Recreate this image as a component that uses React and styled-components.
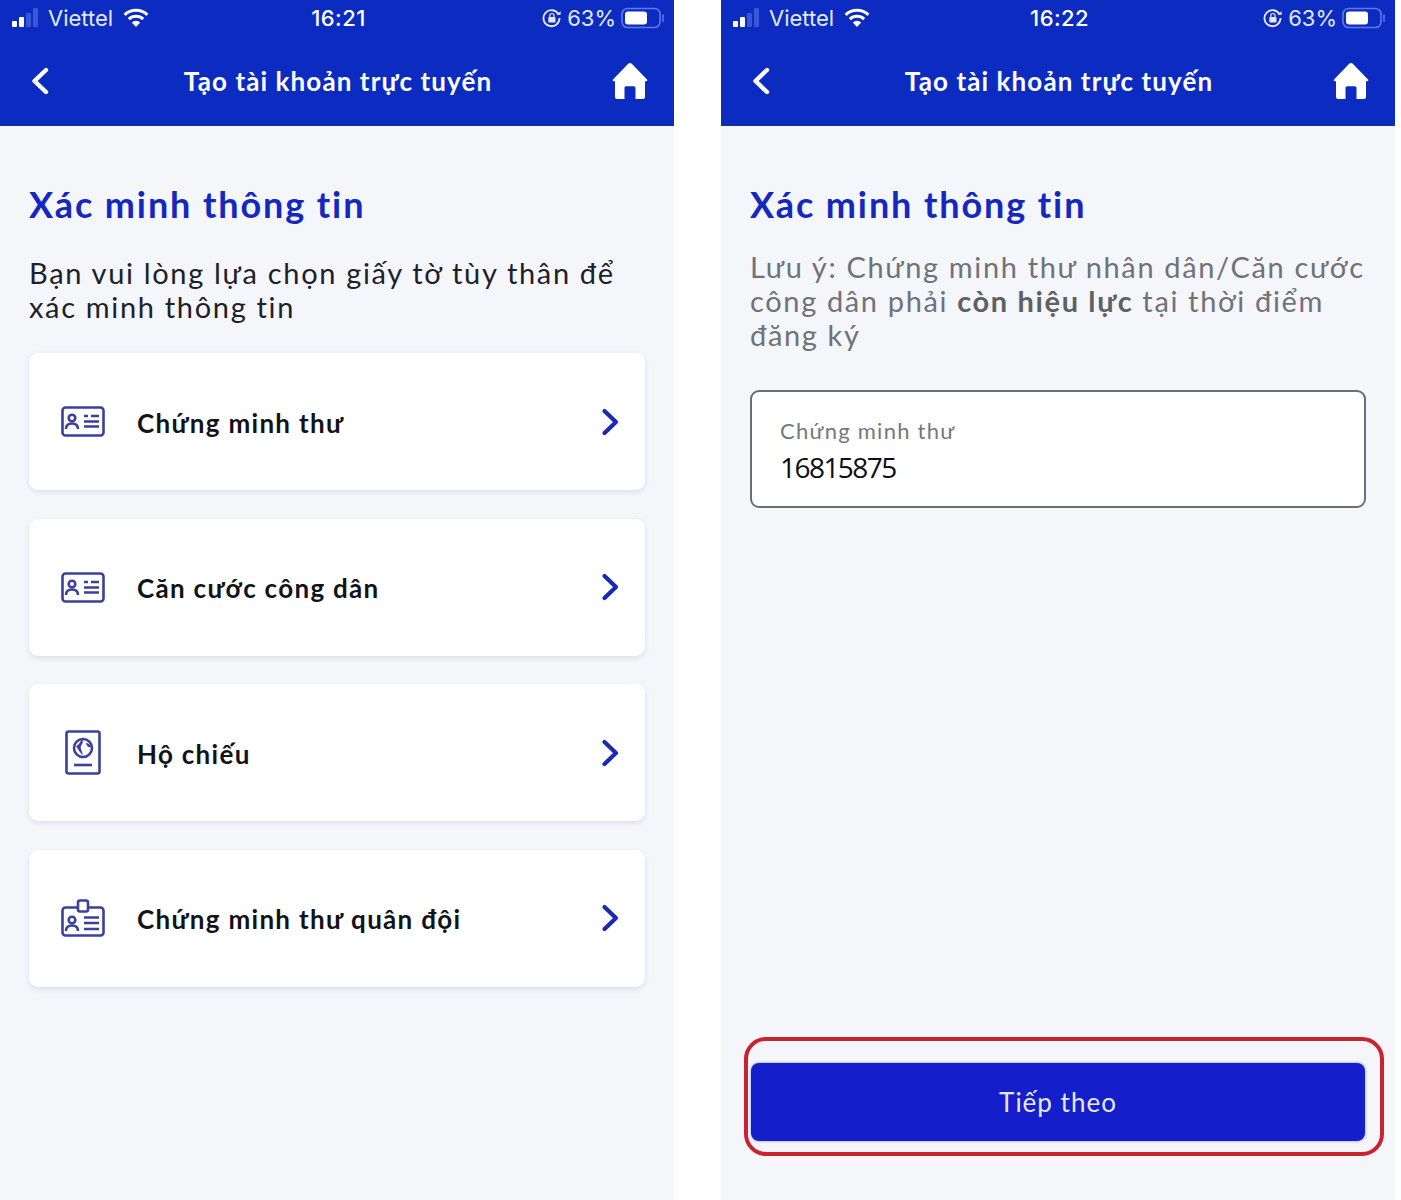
import React from "react";
import styled, { createGlobalStyle } from "styled-components";

const Global = createGlobalStyle`
  html, body { margin: 0; padding: 0; background: #fff; }
  body { font-family: "Lato", "Noto Sans", sans-serif; }
  * { box-sizing: border-box; }
`;
const Page = styled.div`
  width: 1401px; height: 1200px; display: flex; gap: 47px; overflow: hidden; background: #fff;
`;
const Phone = styled.div`
  width: 674px; height: 1200px; flex: none; display: flex; flex-direction: column; background: #f4f6fa; position: relative;
`;
const Header = styled.header`
  height: 126px; flex: none; background: #0b2bc1; color: #fff; display: flex; flex-direction: column;
  border-bottom: 1px solid #1c2f8e;
`;
const StatusBar = styled.div`
  height: 37px; flex: none; display: grid; grid-template-columns: 1fr auto 1fr; align-items: center; padding: 0 9px 2px 12px;
  font-size: 22px; color: #e3e8fb; font-family: "Inter", sans-serif;
`;
const StatusLeft = styled.div`display: flex; align-items: center; gap: 6px;`;
const StatusRight = styled.div`display: flex; align-items: center; justify-content: flex-end; gap: 5px;`;
const Clock = styled.div`font-weight: 500; font-size: 22px; letter-spacing: .4px; color: #fff;`;
const NavBar = styled.div`
  flex: 1; display: grid; grid-template-columns: 1fr auto 1fr; align-items: center; padding: 0 26px 0 30px;
`;
const NavTitle = styled.h1`
  margin: 0 2px 0 0; font-size: 26px; font-weight: 700; letter-spacing: 1.1px; color: #fff;
`;
const NavEnd = styled.div`display: flex; justify-content: flex-end;`;
const NavStart = styled.div`display: flex;`;
const Content = styled.main`
  flex: 1; display: flex; flex-direction: column; padding: 55px 29px 0;
`;
const Title = styled.h2`
  margin: 0; font-size: 36px; line-height: 46px; font-weight: 700; letter-spacing: 1.9px; color: #1427c0;
`;
const Intro = styled.p`
  margin: 29px 0 29px; font-size: 29px; line-height: 34px; letter-spacing: 1.67px; color: #1d1f2a;
`;
const Note = styled.p`
  margin: 23px 0 38px; font-size: 29px; line-height: 34px; letter-spacing: 1.64px; color: #6f7278;
  b { font-weight: 700; color: #5d6065; }
`;
const Cards = styled.div`display: flex; flex-direction: column; gap: 28.6px;`;
const Card = styled.div`
  height: 137px; background: #fff; border-radius: 9px; box-shadow: 0 2px 5px rgba(120,140,190,.22);
  display: flex; align-items: center; padding: 0 26px 0 32px;
`;
const CardIcon = styled.div`width: 44px; display: flex; justify-content: center; flex: none;`;
const CardLabel = styled.span`
  flex: 1; margin: 2px 0 0 32px; font-size: 26px; font-weight: 700; letter-spacing: 1.3px; color: #111318;
`;
const Chevron = styled.svg`display: block;`;
const Field = styled.div`
  height: 118px; background: #fff; border: 2px solid #6d6e72; border-radius: 9px; padding: 25px 28px 0;
`;
const FieldLabel = styled.div`font-size: 22px; line-height: 27px; letter-spacing: 1.25px; color: #75777c;`;
const FieldValue = styled.div`
  margin-top: 6px; font-size: 28px; line-height: 34px; color: #0d0e12; letter-spacing: -1.55px;
  font-family: "Open Sans", sans-serif;
`;
const Button = styled.button`
  margin: auto 1px 59px; height: 78px; border: none; border-radius: 8px; background: #141fcb;
  box-shadow: 0 0 3px rgba(90,120,240,.8); color: #e6e9fb; font: 400 26px "Lato", sans-serif; letter-spacing: 1px;
`;
const Highlight = styled.div`
  position: absolute; left: 23px; top: 1037px; width: 640px; height: 119px; border: 4px solid #c9232f; border-radius: 22px; pointer-events: none;
`;

const Signal = () => (
  <svg width="30" height="20" viewBox="0 0 30 20">
    <rect x="0" y="13" width="5" height="6" rx="1" fill="#fff" />
    <rect x="7" y="9" width="5" height="10" rx="1" fill="#fff" />
    <rect x="14" y="5" width="5" height="14" rx="1" fill="#3a57d6" />
    <rect x="21" y="0" width="5" height="19" rx="1" fill="#3a57d6" />
  </svg>
);
const Wifi = () => (
  <svg width="28" height="20" viewBox="0 0 28 20" style={{ marginLeft: 3 }}>
    <path d="M14 19l-4.2-4.6a6 6 0 0 1 8.400 0z" fill="#fff" />
    <path d="M6.800 11.200a10.500 10.500 0 0 1 14.400 0" stroke="#fff" strokeWidth="3" fill="none" />
    <path d="M2.600 6.800a16.600 16.600 0 0 1 22.800 0" stroke="#fff" strokeWidth="3" fill="none" />
  </svg>
);
const Lock = () => (
  <svg width="20" height="20" viewBox="0 0 20 20" fill="none">
    <path d="M16.600 6.500A8 8 0 1 0 17.500 10" stroke="#e3e8fb" strokeWidth="1.800" />
    <path d="M14.500 6.500l4 .5.2-3.800z" fill="#e3e8fb" />
    <rect x="6.300" y="9" width="7.200" height="5.500" rx="1" fill="#e3e8fb" />
    <path d="M7.800 9V7.600a2.100 2.100 0 0 1 4.200 0V9" stroke="#e3e8fb" strokeWidth="1.200" />
  </svg>
);
const Battery = () => (
  <svg width="44" height="22" viewBox="0 0 44 22" fill="none">
    <rect x="1" y="1.500" width="38" height="19" rx="5.500" stroke="#6079ea" strokeWidth="1.600" />
    <rect x="4" y="4.500" width="22" height="13" rx="3" fill="#fff" />
    <path d="M42 8v6" stroke="#6079ea" strokeWidth="1.600" strokeLinecap="round" />
  </svg>
);
const Back = () => (
  <svg width="20" height="28" viewBox="0 0 20 28" fill="none">
    <path d="M16 3L4.500 14 16 25" stroke="#fff" strokeWidth="4.400" strokeLinecap="round" strokeLinejoin="round" />
  </svg>
);
const Home = () => (
  <svg width="36" height="38" viewBox="0 0 36 38">
    <path fillRule="evenodd" d="M18 1c.7 0 1.300.3 1.800.8L35 17.500c.6.7.2 1.800-.8 1.800H33V35a2 2 0 0 1-2 2h-7.500V26c0-1-.7-1.700-1.700-1.700h-7.600c-1 0-1.700.7-1.700 1.700v11H5a2 2 0 0 1-2-2V19.300H1.800c-1 0-1.400-1.100-.8-1.800L16.200 1.800c.5-.5 1.100-.8 1.800-.8z" fill="#fff" />
  </svg>
);
const Arrow = () => (
  <Chevron width="18" height="28" viewBox="0 0 18 28" fill="none">
    <path d="M3.500 3L15 14 3.500 25" stroke="#1b2ab2" strokeWidth="4.200" strokeLinecap="round" strokeLinejoin="round" />
  </Chevron>
);
const stroke = "#3b3f9e";
const IdCard = () => (
  <svg width="44" height="31" viewBox="0 0 44 31" fill="none" stroke={stroke} strokeWidth="2.600">
    <rect x="1.500" y="1.500" width="41" height="28" rx="3" />
    <circle cx="11" cy="12" r="3.300" />
    <path d="M5 23c0-4 2.500-5.500 6-5.500s6 1.500 6 5.500" />
    <path d="M23 10h4M30 10h8M23 15.500h15M23 20.500h15" />
  </svg>
);
const Passport = () => (
  <svg width="36" height="45" viewBox="0 0 36 45" fill="none" stroke={stroke} strokeWidth="2.600">
    <rect x="1.500" y="1.500" width="33" height="42" rx="2" />
    <circle cx="18" cy="18" r="9" />
    <path d="M11 16c3-1 4-4 6-7 2 3 0 5-1 7s1 5 2 9c-3-2-5-6-7-9zM21 13c2 0 4 1 5 4-2 1-4 0-5-4z" fill={stroke} stroke="none" />
    <path d="M9 35h18" />
  </svg>
);
const Badge = () => (
  <svg width="44" height="39" viewBox="0 0 44 39" fill="none" stroke={stroke} strokeWidth="2.600">
    <path d="M16 8.500H4.500a3 3 0 0 0-3 3v22a3 3 0 0 0 3 3h35a3 3 0 0 0 3-3v-22a3 3 0 0 0-3-3H28" />
    <rect x="17" y="1.500" width="10" height="11" rx="2" />
    <circle cx="11" cy="21" r="3.300" />
    <path d="M5 32c0-4 2.500-5.500 6-5.500s6 1.500 6 5.500" />
    <path d="M23 18.500h15M23 24h15M23 30h15" />
  </svg>
);

const AppHeader = ({ time }) => (
  <Header>
    <StatusBar>
      <StatusLeft><Signal /><span>Viettel</span><Wifi /></StatusLeft>
      <Clock>{time}</Clock>
      <StatusRight><Lock /><span>63%</span><Battery /></StatusRight>
    </StatusBar>
    <NavBar>
      <NavStart><Back /></NavStart>
      <NavTitle>Tạo tài khoản trực tuyến</NavTitle>
      <NavEnd><Home /></NavEnd>
    </NavBar>
  </Header>
);

const docs = [
  { label: "Chứng minh thư", icon: <IdCard /> },
  { label: "Căn cước công dân", icon: <IdCard /> },
  { label: "Hộ chiếu", icon: <Passport /> },
  { label: "Chứng minh thư quân đội", icon: <Badge /> },
];

export default function App() {
  return (
    <Page>
      <Global />
      <Phone>
        <AppHeader time="16:21" />
        <Content>
          <Title>Xác minh thông tin</Title>
          <Intro>Bạn vui lòng lựa chọn giấy tờ tùy thân để xác minh thông tin</Intro>
          <Cards>
            {docs.map((d) => (
              <Card key={d.label}>
                <CardIcon>{d.icon}</CardIcon>
                <CardLabel>{d.label}</CardLabel>
                <Arrow />
              </Card>
            ))}
          </Cards>
        </Content>
      </Phone>
      <Phone>
        <AppHeader time="16:22" />
        <Content>
          <Title>Xác minh thông tin</Title>
          <Note>Lưu ý: Chứng minh thư nhân dân/Căn cước công dân phải <b>còn hiệu lực</b> tại thời điểm đăng ký</Note>
          <Field>
            <FieldLabel>Chứng minh thư</FieldLabel>
            <FieldValue>16815875</FieldValue>
          </Field>
          <Button>Tiếp theo</Button>
        </Content>
        <Highlight />
      </Phone>
    </Page>
  );
}
